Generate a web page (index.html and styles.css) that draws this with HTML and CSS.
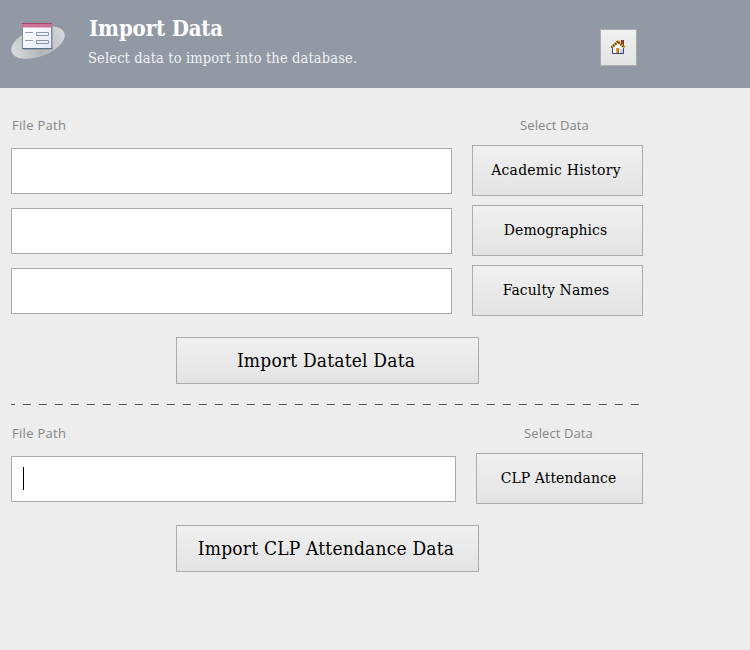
FILE: index.html
```
<!DOCTYPE html>
<html lang="en">
<head>
<meta charset="utf-8">
<title>Import Data</title>
<link rel="stylesheet" href="styles.css">
</head>
<body>
<header class="header">
  <svg class="form-icon" width="56" height="40" viewBox="0 0 56 40">
    <defs>
      <linearGradient id="disc" x1="0" y1="0" x2="1" y2="0"><stop offset="0" stop-color="#d9dbdc"/><stop offset=".5" stop-color="#b4b7ba"/><stop offset="1" stop-color="#d6d9db"/></linearGradient>
      <linearGradient id="sheet" x1="0" y1="0" x2="1" y2="1"><stop offset="0" stop-color="#ffffff"/><stop offset="1" stop-color="#e3e9f5"/></linearGradient>
    </defs>
    <ellipse cx="27" cy="22.500" rx="28" ry="14" transform="rotate(-20 27 22.500)" fill="url(#disc)"/>
    <rect x="12" y="4" width="30" height="26" fill="#8e9299" opacity=".6"/>
    <rect x="11.500" y="3.500" width="29" height="25" fill="url(#sheet)" stroke="#7b8ea3"/>
    <path d="M11 28.500h30" stroke="#55718a"/>
    <rect x="11" y="3" width="30" height="4.500" fill="#cd7297"/>
    <path d="M11 3.500H41" stroke="#a3496d"/>
    <path d="M14 12.500h8M14 20.500h8" stroke="#939fb0"/>
    <path d="M25.500 12.500h12v3h-12zM25.500 20.500h12v3h-12z" fill="#eef2f9" stroke="#8b95aa"/>
  </svg>
  <div class="heading">
    <h1 class="title">Import Data</h1>
    <p class="subtitle">Select data to import into the database.</p>
  </div>
  <button class="home" aria-label="Home">
    <svg width="16" height="16" viewBox="0 0 16 16">
      <rect x="10" y="0" width="3" height="6" fill="#8b3a2c"/>
      <path d="M2 8L7 3l5 5v6H2z" fill="#f8faff"/>
      <path d="M9 9h3v5H9z" fill="#c5d5f2"/>
      <path d="M1.500 7v6.500h11V7" fill="none" stroke="#34466f"/>
      <path d="M5 8h3v5H5z" fill="#d99a32"/>
      <path d="M7 9h1v4H7z" fill="#9a691d"/>
      <path d="M.5 7.500L7 1.500l6.500 6" fill="none" stroke="#dba02c" stroke-width="2.500"/>
      <path d="M.5 7.500L7 1.500l6.500 6" fill="none" stroke="#453f36" stroke-width="2.500" stroke-dasharray="1 1.500"/>
    </svg>
  </button>
</header>
<main class="content">
  <section class="group datatel">
    <div class="labels"><span>File Path</span><span class="select-label">Select Data</span></div>
    <div class="row"><input class="path" type="text" aria-label="Academic History path"><button class="button academic">Academic History</button></div>
    <div class="row"><input class="path" type="text" aria-label="Demographics path"><button class="button demographics">Demographics</button></div>
    <div class="row"><input class="path" type="text" aria-label="Faculty Names path"><button class="button faculty">Faculty Names</button></div>
    <button class="button import import-datatel">Import Datatel Data</button>
  </section>
  <div class="divider"></div>
  <section class="group clp">
    <div class="labels"><span>File Path</span><span class="select-label">Select Data</span></div>
    <div class="row"><div class="path focused"><span class="caret"></span></div><button class="button attendance">CLP Attendance</button></div>
    <button class="button import import-clp">Import CLP Attendance Data</button>
  </section>
</main>
</body>
</html>
```
FILE: styles.css
```
* { box-sizing: border-box; }
body {
  margin: 0;
  min-height: 650px;
  background: #ededed;
  color: #000;
  font-family: "DejaVu Serif Condensed", "DejaVu Serif", serif;
  font-stretch: condensed;
}
button { font-family: inherit; font-stretch: inherit; color: inherit; padding: 0; }
.header {
  display: flex;
  height: 88px;
  padding-right: 113px;
  background: #9299a5;
}
.form-icon { margin: 20px 0 0 11px; overflow: visible; }
.heading { margin-left: 21px; flex: 1; white-space: nowrap; }
.title { margin: 13px 0 0 1px; font-size: 22px; line-height: 30px; color: #fff; font-weight: bold; letter-spacing: -.15px; }
.subtitle { margin: 5px 0 0; font-size: 14.5px; line-height: 20px; color: #f0f1f3; letter-spacing: .15px; }
.home {
  display: flex;
  align-items: center;
  justify-content: center;
  width: 37px;
  height: 37px;
  margin-top: 29px;
  border: 1px solid #ababab;
  background: linear-gradient(#f0f0f0, #e3e3e3);
}
.content { width: 643px; padding-left: 11px; }
.group { display: flex; flex-direction: column; }
.labels {
  display: flex;
  justify-content: space-between;
  height: 57px;
  padding: 27px 0 0 1px;
  color: #858585;
  font: 13px/20px "Open Sans", sans-serif;
  letter-spacing: .3px;
}
.select-label { width: 171px; text-align: center; padding-right: 6px; letter-spacing: .1px; }
.row { display: flex; align-items: center; gap: 20px; height: 51px; margin-bottom: 9px; }
.path { flex: 1; height: 46px; min-width: 0; border: 1px solid #ababab; border-radius: 0; background: #fff; padding: 10px 11px; outline: none; }
.caret { display: block; width: 1px; height: 23px; background: #000; }
.button {
  width: 171px;
  height: 51px;
  border: 1px solid #ababab;
  background: linear-gradient(#f0f0f0, #e3e3e3);
  font-size: 15.5px;
  letter-spacing: .1px;
  padding-bottom: 2px;
  padding-right: 3px;
  white-space: nowrap;
}
.academic { letter-spacing: .25px; }
.demographics { padding-right: 4px; }
.import { width: 303px; height: 47px; margin: 12px 0 0 165px; font-size: 19px; letter-spacing: .2px; padding-bottom: 2px; }
.divider {
  width: 628px;
  height: 1px;
  margin-top: 20px;
  background: repeating-linear-gradient(90deg, #5c5c5c 0 8px, transparent 8px 16px) -4px 0 / 640px 1px;
}
.clp .labels { height: 48px; padding-top: 18px; }
.clp .select-label { width: 167px; padding-right: 2px; }
.attendance { width: 167px; padding-right: 2px; }
```
